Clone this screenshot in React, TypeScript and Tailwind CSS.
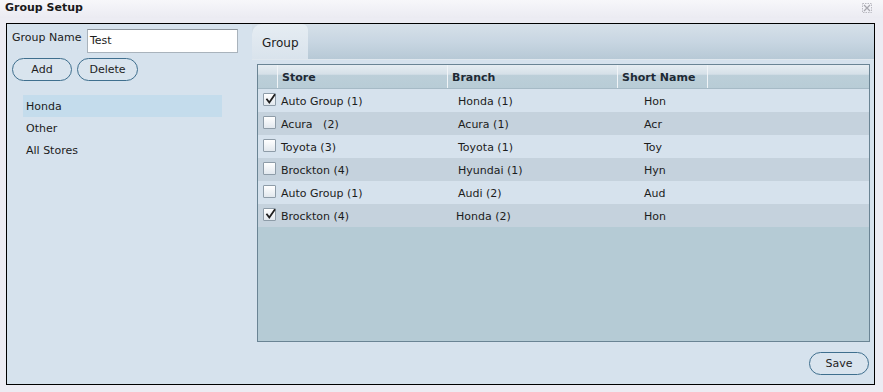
import React from "react";

type Row = { checked: boolean; store: string; branch: string; short: string; alt: boolean; bpl?: string };

const rows: Row[] = [
  { checked: true, store: "Auto Group (1)", branch: "Honda (1)", short: "Hon", alt: false },
  { checked: false, store: "Acura\u00a0\u00a0 (2)", branch: "Acura (1)", short: "Acr", alt: true },
  { checked: false, store: "Toyota (3)", branch: "Toyota (1)", short: "Toy", alt: false },
  { checked: false, store: "Brockton (4)", branch: "Hyundai (1)", short: "Hyn", alt: true },
  { checked: false, store: "Auto Group (1)", branch: "Audi (2)", short: "Aud", alt: false },
  { checked: true, store: "Brockton (4)", branch: "Honda (2)", short: "Hon", alt: true, bpl: "pl-[8px]" },
];

function Checkbox({ checked }: { checked: boolean }) {
  return (
    <div className="relative w-[13px] h-[13px] border border-[#8e9ca8] bg-gradient-to-b from-[#ffffff] to-[#e2e8ee] rounded-[1px]">
      {checked && (
        <svg className="absolute left-[1px] top-[0px]" width="11" height="11" viewBox="0 0 11 11">
          <path d="M2 5.5 L4.3 8.5 L9.5 1" fill="none" stroke="#1f1f1f" strokeWidth="1.8" strokeLinecap="square" />
        </svg>
      )}
    </div>
  );
}

function PillButton({ label, w }: { label: string; w: string }) {
  return (
    <button
      className={`${w} h-[23px] rounded-full border-[1.5px] border-[#3f6f8e] bg-[#d9e4ee] text-[11px] text-[#1d1d1d] flex items-center justify-center pt-[1px]`}
    >
      {label}
    </button>
  );
}

export default function App() {
  return (
    <div
      className="w-[883px] h-[392px] bg-[#ececf3] overflow-hidden text-[11px] text-[#1c1c1c]"
      style={{ fontFamily: '"DejaVu Sans", Verdana, sans-serif' }}
    >
      {/* Title bar */}
      <div className="h-[18px] flex items-start justify-between pl-[5px] pr-[11px] pt-[2px] bg-gradient-to-b from-[#f7f7fa] to-[#ebebf2]">
        <span className="font-bold text-[11px] text-[#1a1a1a] leading-[11px]">Group Setup</span>
        <svg width="10" height="10" viewBox="0 0 10 10" className="mt-[1px]">
          <rect x="0.5" y="0.5" width="9" height="9" fill="none" stroke="#b9b9c0" strokeDasharray="1.5 1" />
          <path d="M2 2 L8 8 M8 2 L2 8" stroke="#a7a7ae" strokeWidth="1.3" />
        </svg>
      </div>

      {/* Main panel */}
      <div className="ml-[6px] mt-[5px] w-[869px] h-[362px] border border-black bg-[#d6e2ed] flex">
        {/* Left column */}
        <div className="w-[245px] flex flex-col pt-[5px] pl-[5px]">
          <div className="flex items-start">
            <span className="w-[75px] pt-[2px] leading-[14px]">Group Name</span>
            <div className="w-[151px] h-[24px] bg-white border border-[#a9b3bc] border-t-[#8c949c] flex items-center pl-[2px] pt-[1px] text-[11px]">
              Test
            </div>
          </div>
          <div className="flex gap-[5px] mt-[5px]">
            <PillButton label="Add" w="w-[60px]" />
            <PillButton label="Delete" w="w-[61px]" />
          </div>
          <div className="mt-[14px] ml-[11px] w-[199px] flex flex-col">
            <div className="h-[22px] bg-[#c4dcec] flex items-center pl-[3px] pt-[3px]">Honda</div>
            <div className="h-[22px] flex items-center pl-[3px] pt-[3px]">Other</div>
            <div className="h-[22px] flex items-center pl-[3px] pt-[3px]">All Stores</div>
          </div>
        </div>

        {/* Right column */}
        <div className="flex-1 flex flex-col">
          {/* Tab strip */}
          <div className="h-[36px] flex bg-gradient-to-b from-[#d6e0e9] via-[#c8d6e2] to-[#b7c9d6] border-b border-[#dfe7ee]">
            <div className="w-[56px] h-full rounded-tl-[10px] rounded-tr-[6px] bg-gradient-to-b from-[#e6edf3] to-[#d9e3ec] flex items-center pl-[10px] pt-[3px] text-[12px]">
              Group
            </div>
          </div>

          {/* Grid */}
          <div className="mt-[4px] ml-[5px] w-[613px] h-[278px] border border-[#6a8494] bg-[#b5cbd5] flex flex-col">
            {/* Header */}
            <div className="h-[24px] flex font-bold text-[#1e2a35] bg-[linear-gradient(to_bottom,#e6edf2_0%,#d5e0e8_40%,#bccfd9_45%,#b8ccd6_100%)] border-b border-[#a6bac6]">
              <div className="w-[20px] border-r border-[#f0f4f7]" />
              <div className="w-[170px] border-r border-[#f0f4f7] flex items-end pb-[2px] pl-[4px]">Store</div>
              <div className="w-[170px] border-r border-[#f0f4f7] flex items-end pb-[2px] pl-[4px]">Branch</div>
              <div className="w-[90px] border-r border-[#f0f4f7] flex items-end pb-[2px] pl-[4px]">Short Name</div>
              <div className="flex-1" />
            </div>
            {/* Rows */}
            {rows.map((r, i) => (
              <div
                key={i}
                className={`h-[23px] flex items-center ${r.alt ? "bg-[#c5d2dd]" : "bg-[#d6e2ed]"}`}
              >
                <div className="w-[20px] flex justify-center pl-[2px] pb-[2px]">
                  <Checkbox checked={r.checked} />
                </div>
                <div className="w-[170px] pl-[3px] pt-[3px]">{r.store}</div>
                <div className={`w-[170px] pt-[3px] ${r.bpl ?? "pl-[10px]"}`}>{r.branch}</div>
                <div className="w-[90px] pl-[26px] pt-[3px]">{r.short}</div>
              </div>
            ))}
          </div>

          {/* Save */}
          <div className="flex justify-end mt-[10px] pr-[5px]">
            <PillButton label="Save" w="w-[60px]" />
          </div>
        </div>
      </div>
    </div>
  );
}
